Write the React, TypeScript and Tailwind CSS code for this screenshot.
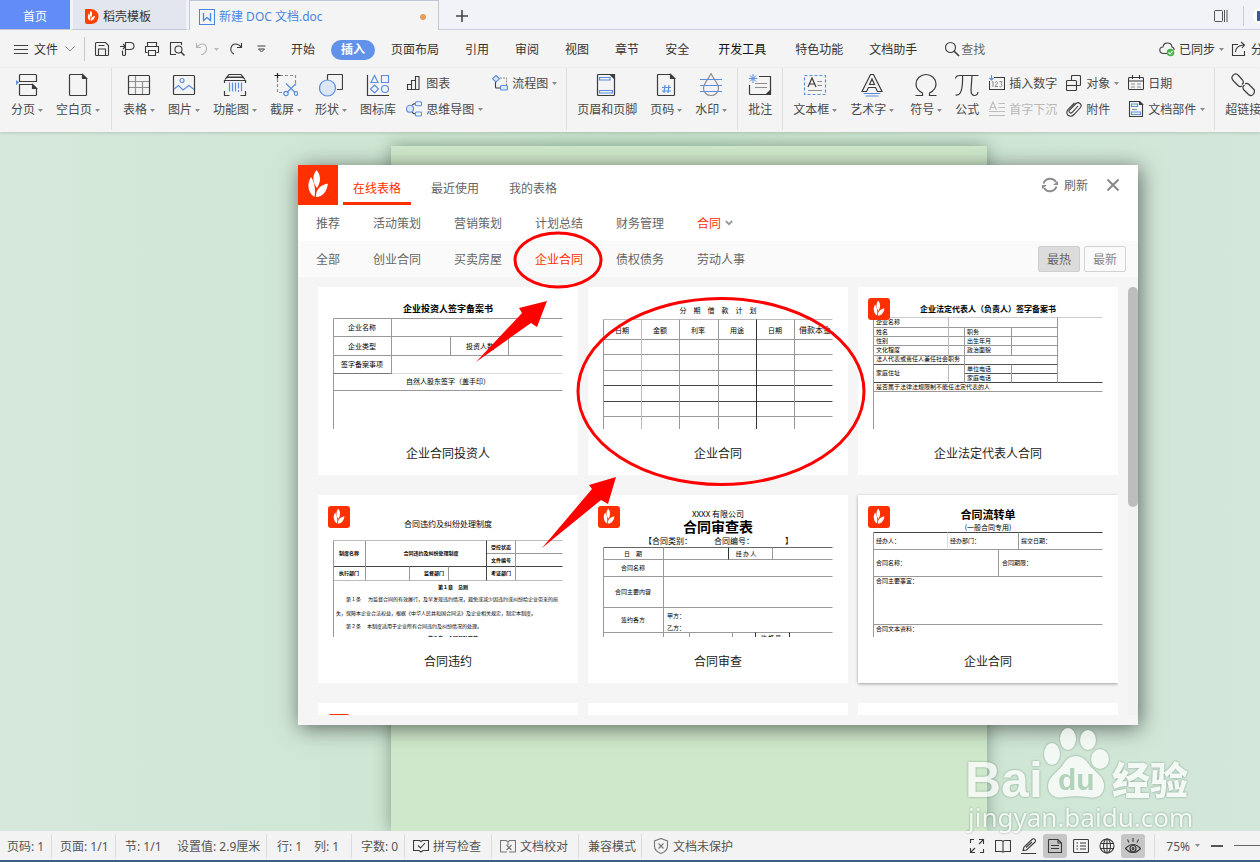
import { JSX, ReactNode } from "react"

type Line = [number, number, number, number, string?]
type Label = [number, number, string, number, ("start" | "middle")?, boolean?]

interface Template {
    name: string;
    badge?: boolean;
    raised?: boolean;
    lines: Line[];
    labels: Label[];
}

interface Tool {
    label: string;
    icon: JSX.Element;
    caret?: boolean;
    disabled?: boolean;
}

const INK = "#3b3b3b"
const BLUE = "#5b8ede"
const GREY = "#8f8f8f"

const Caret = ({ light }: { light?: boolean }) => (
    <svg viewBox="0 0 5 3" className="h-[3px] w-[5px] shrink-0" aria-hidden="true">
        <path d="M0 0h5L2.5 3z" fill={light ? "#bbb" : "#8a8a8a"} />
    </svg>
)

const Big = ({ children }: { children: ReactNode }) => (
    <svg viewBox="0 0 24 24" className="size-6" fill="none" stroke={INK} strokeWidth="1.2" aria-hidden="true">
        {children}
    </svg>
)

const Small = ({ children, stroke = INK }: { children: ReactNode; stroke?: string }) => (
    <svg viewBox="0 0 16 16" className="size-4 shrink-0" fill="none" stroke={stroke} strokeWidth="1.1" aria-hidden="true">
        {children}
    </svg>
)

// label beside an icon, kept optically centred
const Word = ({ children }: { children: ReactNode }) => <span className="pt-[2px]">{children}</span>

const Leaves = () => (
    <>
        <path d="M18.5 5C23 10 23 17 19 23C14 17 14.500 10 18.500 5Z" />
        <path d="M13 12C8.500 19 10 28 16.500 32C17.500 25 17 18 13 12Z" />
        <path d="M30 18.500C22 20 17.500 25 18 32C25 31.500 28.500 27 30 18.500Z" />
    </>
)

const LeafLogo = ({ className }: { className: string }) => (
    <svg viewBox="0 0 40 40" className={className} fill="#fff" aria-hidden="true">
        <Leaves />
    </svg>
)

/* RIBBON DATA */

const pageTools: Tool[] = [
    {
        label: "分页",
        caret: true,
        icon: (
            <Big>
                <path d="M4.500 8.500V2.500q0-1 1-1h15q1 0 1 1v6zM4.500 11.500h13l4 4v6q0 1-1 1h-15q-1 0-1-1z" />
                <path d="M17.500 11.500v4h4z" fill={INK} />
                <path d="M1 7l3 2.500L1 12z" fill={BLUE} stroke="none" />
            </Big>
        ),
    },
    {
        label: "空白页",
        caret: true,
        icon: (
            <Big>
                <path d="M4.500 1.500h12l4 4v16q0 1-1 1h-15q-1 0-1-1v-19q0-1 1-1z" />
                <path d="M16.500 1.500v4h4z" fill={INK} />
            </Big>
        ),
    },
]

const insertTools: Tool[] = [
    {
        label: "表格",
        caret: true,
        icon: (
            <Big>
                <path d="M2 8.500h20M2 14.500h20M8.500 3v18M15.500 9v12" stroke={GREY} />
                <rect x="1.500" y="2.500" width="21" height="19" rx="1" />
            </Big>
        ),
    },
    {
        label: "图片",
        caret: true,
        icon: (
            <Big>
                <rect x="1.500" y="2.500" width="21" height="19" rx="1" />
                <circle cx="10" cy="7.500" r="2" stroke={BLUE} />
                <path d="M2 16l4.500-3.500L11 17l6-4.500 5 4" stroke={BLUE} />
            </Big>
        ),
    },
    {
        label: "功能图",
        caret: true,
        icon: (
            <Big>
                <path d="M6 1.500h12l2 2.500H4zM2 6.500q1-2 3-2h14q2 0 3 2M1.500 10V7.500h21V10M1.500 18v4.500h5M22.500 18v4.500h-5" />
                <path d="M6.500 9.500v9M9.500 9.500v9M12.500 9.500v9M15.500 9.500v6M15.500 17v2M18.500 9.500v9" stroke={BLUE} />
            </Big>
        ),
    },
    {
        label: "截屏",
        caret: true,
        icon: (
            <Big>
                <path d="M6 2.500h15.500v10M3.500 6v13.500H9" stroke={GREY} strokeDasharray="3 2" />
                <path d="M0.500 2.500h6M3.500 0v5.500" stroke="#222" />
                <path d="M12 10.500l9 9M22 10.500l-9 9" stroke={BLUE} />
                <circle cx="12" cy="20.500" r="2.200" stroke={BLUE} />
                <circle cx="22" cy="20.500" r="1.800" stroke={BLUE} />
            </Big>
        ),
    },
    {
        label: "形状",
        caret: true,
        icon: (
            <Big>
                <path d="M8.500 7V2.500q0-1 1-1h13q1 0 1 1v13q0 1-1 1H18" />
                <circle cx="8.500" cy="15" r="8" stroke={BLUE} fill="#dde6f4" />
            </Big>
        ),
    },
    {
        label: "图标库",
        icon: (
            <Big>
                <path d="M1.500 2v20.500H23" />
                <path d="M8.500 2.500l3.500 7H5zM15.500 2.500h7v7h-7zM8.500 12l4 4-4 4-4-4z" stroke={BLUE} />
                <circle cx="19" cy="16" r="3.500" stroke={BLUE} />
            </Big>
        ),
    },
]

const chartTools: Tool[] = [
    {
        label: "图表",
        icon: (
            <Small>
                <path d="M1.500 9.500h4v5h-4zM5.500 5.500h4v9h-4zM9.500 1.500h3.500v13H9.500z" />
            </Small>
        ),
    },
    {
        label: "思维导图",
        caret: true,
        icon: (
            <Small stroke={BLUE}>
                <path d="M6 4.500Q7 2.500 10 2.500M6 11Q7 13 10 13" stroke={INK} />
                <circle cx="4" cy="7.800" r="3.500" fill="#dde6f4" />
                <rect x="9.500" y="0.800" width="6" height="4" rx="1" />
                <rect x="9.500" y="11" width="6" height="4" rx="1" />
            </Small>
        ),
    },
]

const flowTools: Tool[] = [
    {
        label: "流程图",
        caret: true,
        icon: (
            <Small stroke={BLUE}>
                <path d="M3.500 6v6q0 1 1 1H8" stroke={INK} />
                <path d="M8 3h6.500v7" stroke={GREY} strokeDasharray="2 1" />
                <path d="M4 .5L7.500 3.800 4 7 .5 3.800z" fill="#dde6f4" />
                <rect x="8.500" y="10.500" width="7" height="4.500" rx="1" fill="#dde6f4" />
            </Small>
        ),
    },
]

const headerTools: Tool[] = [
    {
        label: "页眉和页脚",
        icon: (
            <Big>
                <path d="M2.500 2.500q0-1 1-1h12l4 4v16q0 1-1 1h-15q-1 0-1-1z" />
                <path d="M15.500 1.500h4v4z" fill={INK} />
                <path d="M4.500 4.500h10.500v2.500H4.500zM4.500 17.500h13v2.500h-13z" stroke={BLUE} />
            </Big>
        ),
    },
    {
        label: "页码",
        caret: true,
        icon: (
            <Big>
                <path d="M4.500 1.500h12l4 4v16q0 1-1 1h-15q-1 0-1-1v-19q0-1 1-1z" />
                <path d="M16.500 1.500v4h4z" fill={INK} />
                <path d="M11 12l-1 8M15 12l-1 8M8 14.500h9M8 18h9" stroke={BLUE} />
            </Big>
        ),
    },
    {
        label: "水印",
        caret: true,
        icon: (
            <Big>
                <path d="M12 .5C9 7 4.500 10 4.500 15.500a7.500 7 0 0015 0C19.500 10 15 7 12 .5z" stroke={GREY} />
                <path d="M1 6.500h22M1 12.500h22M1 18.500h22" stroke={BLUE} />
            </Big>
        ),
    },
]

const noteTools: Tool[] = [
    {
        label: "批注",
        icon: (
            <Big>
                <path d="M11 3.500h11.500v14l-4 4H2.500q-1 0-1-1V12" />
                <path d="M22.500 17.500v4h-4z" fill={INK} />
                <path d="M7 10.500h12M7 14.500h12" stroke={GREY} />
                <path d="M5 1v9M.8 5.500h8.500M2 2.500l6 6M8 2.500l-6 6" stroke={BLUE} strokeWidth="1" />
            </Big>
        ),
    },
]

const textTools: Tool[] = [
    {
        label: "文本框",
        caret: true,
        icon: (
            <Big>
                <rect x="1.500" y="2.500" width="21" height="19" stroke={BLUE} strokeDasharray="3 2" />
                <path d="M5 14l4-9 4 9M6.500 11h5" />
                <path d="M14.500 8.500H19M14.500 12.500H19M5 17.500h14" stroke={GREY} />
            </Big>
        ),
    },
    {
        label: "艺术字",
        caret: true,
        icon: (
            <Big>
                <path d="M2 18.500L10.500 1.500h3L22 18.500h-4.500l-2-4h-7l-2 4zM9.500 11.500L12 6l2.500 5.500z" />
                <path d="M3.500 20.500h17M5.500 23h13" stroke={BLUE} />
            </Big>
        ),
    },
]

const symbolTools: Tool[] = [
    {
        label: "符号",
        caret: true,
        icon: (
            <Big>
                <path d="M1.500 22.500h7v-2.500C4.500 18 2 15 2 11a10 9.500 0 0120 0c0 4-2.500 7-6.500 9v2.500h7" />
            </Big>
        ),
    },
    {
        label: "公式",
        icon: (
            <Big>
                <path d="M.5 5.500Q1 2.500 4.500 2.500h19M7.500 2.500Q8 14 5.500 19.500 4 22.500.5 22M17 2.500L16 17q0 5.500 3.500 5.500Q22.500 22.500 23 19" />
            </Big>
        ),
    },
]

const numberTools: Tool[] = [
    {
        label: "插入数字",
        icon: (
            <Small>
                <path d="M5 2.500h10.500v12H.5V6" />
                <path d="M2.500 0v5M.5 3l2 2 2-2" stroke={BLUE} />
                <path d="M3 7l1-.5V12M6 7.500q2-2 2.500 0 0 1.500-2.500 4h3M10.500 6.500H13L12 9q2 1 .5 2.500-1 .8-2 0" stroke={GREY} strokeWidth="1" />
            </Small>
        ),
    },
    {
        label: "首字下沉",
        disabled: true,
        icon: (
            <Small stroke="#bdbdbd">
                <path d="M.5 9L4 1l3.500 8M2 6.500h4M9.500 2.500H16M9.500 6.500H16M0 10.500h16M0 14.500h16" />
            </Small>
        ),
    },
]

const objectTools: Tool[] = [
    {
        label: "对象",
        caret: true,
        icon: (
            <Small>
                <path d="M5.500 5V1.500q0-1 1-1h7q1 0 1 1v8q0 1-1 1H11" />
                <rect x="0.500" y="5.500" width="10" height="10" rx="1" />
                <path d="M.5 10.500h10" />
            </Small>
        ),
    },
    {
        label: "附件",
        icon: (
            <Small>
                <path d="M12 5l-6 6.500q-1.500 1.200-2.500 0t0-2.500L10 2.500q2-1.800 4 0t.500 4L8 13.500q-3 3-6 .8-2.500-3 .2-6L8.500 2" />
            </Small>
        ),
    },
]

const partTools: Tool[] = [
    {
        label: "日期",
        icon: (
            <Small>
                <rect x="0.500" y="2.500" width="15" height="12" rx="1" />
                <path d="M.5 6h15M4.500 0v4M11.500 0v4" />
                <path d="M3 9h4M9 9h4M3 12h4M9 12h4" stroke={GREY} />
            </Small>
        ),
    },
    {
        label: "文档部件",
        caret: true,
        icon: (
            <Small>
                <path d="M1.500.5h10l3 3v12h-13z" />
                <path d="M11.500.5v3h3z" fill={INK} />
                <path d="M3.500 3h6v2.500h-6zM3.500 11h9v2.500h-9z" stroke={BLUE} />
                <path d="M4 8.500h5" stroke={GREY} />
            </Small>
        ),
    },
]

const linkTools: Tool[] = [
    {
        label: "超链接",
        icon: (
            <Big>
                <path d="M11 11.500q2.500-2 .5-4.500L7.500 2.500Q4.500-.5 2 2.300T2.500 8l4.500 4.500q2 1.800 4 .500M13.500 12q-3 2-.5 5l4.500 4.500q3 2.500 5-.5t0-5L18 11.500q-2-1.800-4-.5" />
            </Big>
        ),
    },
]

/* TEMPLATE THUMBNAILS */

const templates: Template[] = [
    {
        name: "企业合同投资人",
        lines: [
            [15, 31, 244, 31], [15, 49, 244, 49], [15, 68, 244, 68], [15, 86, 74, 86, "#777"], [74, 86, 244, 86, "#ddd"],
            [15, 103, 244, 103], [15, 31, 15, 142], [73, 31, 73, 86], [132, 49, 132, 68], [190, 49, 190, 68],
        ],
        labels: [
            [130, 22, "企业投资人签字备案书", 9, "middle", true],
            [44, 40, "企业名称", 7, "middle"],
            [44, 59, "企业类型", 7, "middle"],
            [44, 77, "签字备案事项", 7, "middle"],
            [162, 59, "投资人数", 7, "middle"],
            [130, 94, "自然人股东签字（盖手印）", 7, "middle"],
        ],
    },
    {
        name: "企业合同",
        lines: [
            [15, 32, 244, 32, "#bbb"], [15, 52, 244, 52], [15, 67, 244, 67], [15, 83, 244, 83], [15, 98, 244, 98, "#444"],
            [15, 114, 244, 114, "#444"], [15, 129, 244, 129], [15, 32, 15, 142], [53, 32, 53, 142, "#bbb"], [91, 32, 91, 142],
            [130, 32, 130, 142], [168, 32, 168, 142, "#333"], [206, 32, 206, 142],
        ],
        labels: [
            [130, 23, "分　期　借　款　计　划", 7, "middle"],
            [34, 43, "日期", 7, "middle"],
            [72, 43, "金额", 7, "middle"],
            [110, 43, "利率", 7, "middle"],
            [149, 43, "用途", 7, "middle"],
            [187, 43, "日期", 7, "middle"],
            [211, 43, "借款本金", 8],
        ],
    },
    {
        name: "企业法定代表人合同",
        badge: true,
        lines: [
            [15, 30, 244, 30, "#ccc"], [15, 40, 199, 40], [15, 49, 199, 49], [15, 58, 199, 58], [15, 68, 199, 68],
            [15, 77, 199, 77, "#555"], [106, 86, 199, 86, "#555"], [15, 95, 244, 95, "#444"], [15, 104, 244, 104],
            [15, 30, 15, 142], [90, 30, 90, 68, "#bbb"], [90, 77, 90, 95, "#bbb"], [106, 40, 106, 95], [153, 40, 153, 68],
            [153, 77, 153, 95], [199, 30, 199, 95],
        ],
        labels: [
            [130, 22, "企业法定代表人（负责人）签字备案书", 8, "middle", true],
            [18, 35, "企业名称", 6],
            [18, 45, "姓名", 6],
            [18, 54, "性别", 6],
            [18, 63, "文化程度", 6],
            [18, 72, "法人代表或责任人兼任社会职务", 6],
            [18, 86, "家庭住址", 6],
            [18, 100, "是否属于法律法规限制不能任法定代表的人", 6],
            [109, 45, "职务", 6],
            [109, 54, "出生年月", 6],
            [109, 63, "政治面貌", 6],
            [109, 82, "单位电话", 6],
            [109, 91, "家庭电话", 6],
        ],
    },
    {
        name: "合同违约",
        badge: true,
        lines: [
            [15, 45, 244, 45, "#bbb"], [168, 58, 244, 58], [15, 71, 244, 71, "#444"], [15, 85, 244, 85, "#bbb"],
            [15, 45, 15, 142], [47, 45, 47, 85], [91, 71, 91, 85], [130, 71, 130, 85], [168, 45, 168, 85, "#444"], [197, 45, 197, 85],
        ],
        labels: [
            [130, 29, "合同违约及纠纷处理制度", 8, "middle"],
            [31, 58, "制度名称", 5, "middle", true],
            [113, 58, "合同违约及纠纷处理制度", 5, "middle", true],
            [183, 52, "受控状态", 5, "middle", true],
            [183, 65, "文件编号", 5, "middle", true],
            [31, 78, "执行部门", 5, "middle", true],
            [116, 78, "监督部门", 5, "middle", true],
            [183, 78, "考证部门", 5, "middle", true],
            [135, 92, "第１章　总则", 5, "middle", true],
            [28, 104, "第１条", 5],
            [50, 104, "为监督合同的有效履行，及早发现违约情况，避免或减少因违约或纠纷给企业带来的损", 5],
            [18, 118, "失，保障本企业合法权益，根据《中华人民共和国合同法》及企业相关规定，制定本制度。", 5],
            [28, 131, "第２条", 5],
            [49, 131, "本制度适用于企业所有合同违约及纠纷情况的处理。", 5],
            [135, 143, "第２章　合同风险防范", 5, "middle", true],
        ],
    },
    {
        name: "合同审查",
        badge: true,
        lines: [
            [15, 52, 244, 52, "#666"], [15, 64, 244, 64], [15, 81, 244, 81], [15, 112, 244, 112], [15, 137, 244, 137],
            [15, 52, 15, 142], [75, 52, 75, 142], [140, 52, 140, 64, "#333"], [184, 52, 184, 64], [101, 137, 101, 142],
            [144, 137, 144, 142], [167, 137, 167, 142, "#333"], [201, 137, 201, 142, "#333"],
        ],
        labels: [
            [130, 19, "XXXX 有限公司", 8, "middle"],
            [130, 32, "合同审查表", 14, "middle", true],
            [56, 46, "【合同类别：", 8],
            [126, 46, "合同编号：", 8],
            [197, 46, "】", 8],
            [45, 59, "日　期", 6, "middle"],
            [158, 59, "经 办 人", 6, "middle"],
            [45, 73, "合同名称", 6, "middle"],
            [45, 97, "合同主要内容", 6, "middle"],
            [45, 125, "签约各方", 6, "middle"],
            [79, 121, "甲方：", 6],
            [79, 133, "乙方：", 6],
            [183, 143, "监 督 员", 6, "middle"],
        ],
    },
    {
        name: "企业合同",
        badge: true,
        raised: true,
        lines: [
            [15, 37, 244, 37, "#444"], [15, 54, 244, 54], [15, 81, 244, 81], [15, 129, 244, 129],
            [15, 37, 15, 142], [89, 37, 89, 54, "#ddd"], [160, 37, 160, 54], [140, 54, 140, 81],
        ],
        labels: [
            [130, 20, "合同流转单", 11, "middle", true],
            [130, 32, "(一般合同专用)", 7, "middle"],
            [18, 46, "经办人：", 6],
            [92, 46, "经办部门：", 6],
            [163, 46, "提交日期：", 6],
            [18, 68, "合同名称：", 6],
            [144, 68, "合同期限：", 6],
            [18, 86, "合同主要事宜：", 6],
            [18, 134, "合同文本资料：", 6],
        ],
    },
    { name: "合同协议", badge: true, lines: [], labels: [] },
    { name: "合同范本", lines: [], labels: [] },
    { name: "合同登记", lines: [], labels: [] },
]

const menuTabs = [
    { label: "页面布局", space: "px-[13px]" },
    { label: "引用", space: "px-[13px]" },
    { label: "审阅", space: "px-[13px]" },
    { label: "视图", space: "px-[13px]" },
    { label: "章节", space: "px-[13px]" },
    { label: "安全", space: "px-[13px]" },
    { label: "开发工具", space: "px-4 text-[#111]" },
    { label: "特色功能", space: "px-[13px]" },
    { label: "文档助手", space: "px-[13px]" },
]

function BigTool({ label, icon, caret }: Tool) {
    return (
        <button type="button" className="flex shrink-0 flex-col items-center gap-[5px]">
            {icon}
            <span className="flex items-center gap-[3px] whitespace-nowrap leading-4">
                {label}
                {caret && <Caret />}
            </span>
        </button>
    )
}

function Group({ tools }: { tools: Tool[] }) {
    return (
        <div className="flex items-start gap-[13px]">
            {tools.map((t) => (
                <BigTool key={t.label} {...t} />
            ))}
        </div>
    )
}

function Stack({ tools }: { tools: Tool[] }) {
    return (
        <div className="flex shrink-0 flex-col items-start gap-2 pt-[1px]">
            {tools.map((t) => (
                <button
                    key={t.label}
                    type="button"
                    disabled={t.disabled}
                    className="flex items-center gap-1 whitespace-nowrap leading-4 disabled:text-[#b8b8b8]"
                >
                    {t.icon}
                    <Word>{t.label}</Word>
                    {t.caret && <Caret />}
                </button>
            ))}
        </div>
    )
}

const Divider = ({ space = "mx-[10px]" }: { space?: string }) => (
    <div className={"-mt-[5px] h-[62px] w-px shrink-0 bg-[#dfdfdf] " + space} />
)

function TitleTabs() {
    return (
        <header className="flex h-[30px] shrink-0 items-stretch bg-[#f2f3f8] text-[12px]">
            <button type="button" className="w-[70px] border-b border-[#c3c8d6] bg-[#628df9] pt-1 text-white">
                首页
            </button>
            <button
                type="button"
                className="flex w-[119px] items-center gap-1 border-x-3 border-b border-x-[#f2f3f8] border-b-[#c3c8d6] bg-[#e3e6ef] pl-3 pt-1 text-[#333]"
            >
                <svg viewBox="0 0 14 15" className="h-[15px] w-[14px]" aria-hidden="true">
                    <path d="M0 0h6q7.500 1 7.500 7.500T6.500 15H2q-2 0-2-2z" fill="#ff4000" />
                    <g fill="#fff" transform="translate(-1 0) scale(.37)">
                        <Leaves />
                    </g>
                </svg>
                稻壳模板
            </button>
            <button
                type="button"
                className="flex w-[250px] items-center gap-1 border-x border-t border-[#c3c8d6] bg-[#f4f4f4] pl-[9px] pr-3 pt-[2px] text-[#4a86e0]"
            >
                <svg viewBox="0 0 16 16" className="size-4" fill="none" stroke="#4a86e0" aria-hidden="true">
                    <rect x="0.500" y="0.500" width="15" height="15" />
                    <path d="M4.500 4v7.500l3.500-3 3.500 3V4" strokeWidth="1.300" />
                </svg>
                新建 DOC 文档.doc
                <span className="ml-auto size-[6px] rounded-full bg-[#e69f5b]" />
            </button>
            <div className="flex flex-1 items-center overflow-hidden border-b border-[#c9cede] pt-[2px]">
                <button type="button" aria-label="新建标签" className="ml-[17px]">
                    <svg viewBox="0 0 12 12" className="size-3" stroke="#444" strokeWidth="1.600" aria-hidden="true">
                        <path d="M6 0v12M0 6h12" />
                    </svg>
                </button>
                <svg viewBox="0 0 14 12" className="ml-auto h-3 w-[14px]" fill="none" stroke="#555" aria-hidden="true">
                    <rect x="0.500" y="0.500" width="8" height="11" rx="1" />
                    <path d="M10.500 0v12M13 0v12" />
                </svg>
                <div className="ml-[15px] h-5 w-px bg-[#c9cbd2]" />
                <div className="ml-[9px] -mr-[9px] flex size-4 items-center rounded-full bg-white">
                    <span className="ml-1 h-[10px] w-2 bg-[#3c5b92]" />
                </div>
            </div>
        </header>
    )
}

function MenuBar() {
    return (
        <nav className="flex h-[38px] shrink-0 items-center overflow-hidden whitespace-nowrap bg-[#f4f4f4] pl-[14px] text-[12px] text-[#333]">
            <button type="button" className="flex items-center gap-[6px]">
                <svg viewBox="0 0 14 9" className="h-[9px] w-[14px]" stroke="#444" aria-hidden="true">
                    <path d="M0 .5h14M0 4.500h14M0 8.500h14" />
                </svg>
                <Word>文件</Word>
                <svg viewBox="0 0 10 6" className="ml-[1px] h-[6px] w-[10px]" fill="none" stroke="#888" aria-hidden="true">
                    <path d="M.5.5L5 5 9.500.5" />
                </svg>
            </button>
            <div className="ml-[9px] h-6 w-px bg-[#c9c9c9]" />
            <div className="ml-[9px] flex items-center gap-[9px]">
                <button type="button" aria-label="保存">
                    <Small>
                        <path d="M1.500 2.500q0-1 1-1h9l3 3v9q0 1-1 1h-11q-1 0-1-1zM4.500 14V8h7v6M4.500 4.500h6" />
                    </Small>
                </button>
                <button type="button" aria-label="输出为PDF">
                    <Small>
                        <path d="M3.500 9.500v4q0 1 1.500 1t1.500-1V1.500H11q4 0 4 3.500t-4 3.500H6.500M1 5.500h5M4 3l2.500 2.500L4 8" />
                    </Small>
                </button>
                <button type="button" aria-label="打印">
                    <Small>
                        <path d="M3.500 5V1.500h9V5M3.500 11.500h-2v-6h13v6h-2M4.500 9.500h7v5h-7z" />
                    </Small>
                </button>
                <button type="button" aria-label="打印预览">
                    <Small>
                        <path d="M7 13.500H1.500v-12h11V4" />
                        <circle cx="9.500" cy="8.500" r="3.500" />
                        <path d="M12 11l3.500 3.500" strokeWidth="1.500" />
                    </Small>
                </button>
                <button type="button" aria-label="撤销" disabled className="flex items-center gap-1">
                    <Small stroke="#b5b5b5">
                        <path d="M2.500 2v4.500H7M2.500 6.500Q5 3 8.500 3t4 4-4 6.500H7" />
                    </Small>
                    <Caret light />
                </button>
                <button type="button" aria-label="恢复">
                    <Small>
                        <path d="M13.500 2v4.500H9M13.500 6.500Q11 3 7.500 3T3 7t3 6" />
                    </Small>
                </button>
                <button type="button" aria-label="更多" className="pl-1">
                    <svg viewBox="0 0 9 8" className="h-2 w-[9px]" fill="none" stroke={INK} aria-hidden="true">
                        <path d="M.5 1h8M1.500 4h6L4.500 7z" />
                    </svg>
                </button>
            </div>
            <div className="ml-3 flex items-center">
                <button type="button" className="px-[13px] pt-[2px]">开始</button>
                <button type="button" className="mx-[3px] mt-[1px] h-5 rounded-full bg-[#5f92e8] px-[10px] font-bold text-white">
                    插入
                </button>
                {menuTabs.map((t) => (
                    <button key={t.label} type="button" className={"pt-[2px] " + t.space}>
                        {t.label}
                    </button>
                ))}
            </div>
            <button type="button" className="ml-[14px] flex items-center gap-[1px] text-[#666]">
                <Small>
                    <circle cx="6.500" cy="6.500" r="5" />
                    <path d="M10 10l5 5" strokeWidth="1.600" />
                </Small>
                <Word>查找</Word>
            </button>
            <div className="-mr-[15px] ml-auto flex items-center">
                <button type="button" className="flex items-center gap-1">
                    <Small>
                        <path d="M8 12.500H4Q.8 12 .8 9T4 6q.5-4 4.500-4T13 6q2.200.5 2.200 3" />
                        <circle cx="11.500" cy="11.500" r="3.800" fill="#4db24a" stroke="none" />
                        <path d="M9.500 11.500l1.500 1.500 2.500-2.800" stroke="#fff" />
                    </Small>
                    <Word>已同步</Word>
                    <Caret />
                </button>
                <button type="button" className="ml-[7px] flex items-center gap-1">
                    <Small>
                        <path d="M7 3.500H1.500v11h12V10M4.500 11q0-6 8-7M10 1l3.500 3L11 7" />
                    </Small>
                    <Word>分享</Word>
                </button>
            </div>
        </nav>
    )
}

function Ribbon() {
    return (
        <div className="z-10 flex h-16 shrink-0 items-start overflow-hidden bg-[#f4f4f4] pl-[11px] pt-[5px] text-[12px] text-[#4a4a4a] shadow-[0_1px_3px_rgba(0,0,0,0.15)]">
            <Group tools={pageTools} />
            <Divider space="mx-[11px]" />
            <Group tools={insertTools} />
            <div className="ml-[10px] flex gap-[9px]">
                <Stack tools={chartTools} />
                <Stack tools={flowTools} />
            </div>
            <Divider space="ml-[9px] mr-[10px]" />
            <Group tools={headerTools} />
            <Divider />
            <Group tools={noteTools} />
            <Divider />
            <div className="flex gap-4">
                <Group tools={textTools} />
                <Group tools={symbolTools} />
            </div>
            <div className="ml-[10px] flex gap-[9px]">
                <Stack tools={numberTools} />
                <Stack tools={objectTools} />
                <Stack tools={partTools} />
            </div>
            <Divider space="ml-[9px] mr-[10px]" />
            <Group tools={linkTools} />
        </div>
    )
}

function Card({ name, badge, raised, lines, labels }: Template) {
    return (
        <article
            className={
                "relative flex h-[188px] flex-col items-center bg-white " +
                (raised ? "shadow-[0_1px_3px_rgba(0,0,0,0.35)]" : "")
            }
        >
            <svg viewBox="0 0 260 142" className="h-[142px] w-full" fontFamily='"Noto Sans CJK SC", sans-serif' role="img" aria-label={name}>
                {lines.map(([x1, y1, x2, y2, color], i) => (
                    <path key={i} d={`M${x1 + 0.5} ${y1 + 0.5}L${x2 + 0.5} ${y2 + 0.5}`} stroke={color ?? "#999"} />
                ))}
                {labels.map(([x, y, text, size, anchor, bold], i) => (
                    <text
                        key={i}
                        x={x}
                        y={y + Math.round(size * 0.38)}
                        fontSize={size}
                        fontWeight={bold ? 700 : 400}
                        textAnchor={anchor ?? "start"}
                        fill="#000"
                    >
                        {text}
                    </text>
                ))}
            </svg>
            {badge && <LeafLogo className="absolute left-[10px] top-[11px] size-[22px] rounded-[3px] bg-[#ff3000]" />}
            <h3 className="mt-[15px] text-[12px] leading-5 text-[#222]">{name}</h3>
        </article>
    )
}

const rowItem = "whitespace-nowrap pt-[2px]"

function TemplateDialog() {
    return (
        <section
            role="dialog"
            aria-label="在线表格"
            className="absolute left-[298px] top-[33px] flex h-[560px] w-[840px] flex-col bg-[#f5f5f5] text-[12px] text-[#666] shadow-[2px_3px_20px_rgba(0,0,0,0.55)]"
        >
            {/* tabs */}
            <div className="flex h-10 shrink-0 items-stretch bg-white">
                <LeafLogo className="size-10 bg-[#ff3000]" />
                <div className="ml-[5px] flex gap-[10px]">
                    <button type="button" className="border-b-3 border-[#ff3000] px-[10px] pt-[10px] text-[#ff3000]">在线表格</button>
                    <button type="button" className="border-b-3 border-transparent px-[10px] pt-[10px]">最近使用</button>
                    <button type="button" className="border-b-3 border-transparent px-[10px] pt-[10px]">我的表格</button>
                </div>
                <button type="button" className="ml-auto flex items-center gap-[6px]">
                    <svg viewBox="0 0 16 16" className="size-4" fill="none" stroke="#8c8c8c" strokeWidth="2" aria-hidden="true">
                        <path d="M1.500 6.500a7 7 0 0112.500-1.500M14.500 9.500A7 7 0 012 11" />
                        <path d="M16 4v4h-5zM0 12V8h5z" fill="#8c8c8c" stroke="none" />
                    </svg>
                    <Word>刷新</Word>
                </button>
                <button type="button" aria-label="关闭" className="ml-[19px] mr-[19px]">
                    <svg viewBox="0 0 12 12" className="size-3" stroke="#888" strokeWidth="2" aria-hidden="true">
                        <path d="M.5.500l11 11M11.500.500l-11 11" />
                    </svg>
                </button>
            </div>

            {/* categories */}
            <div className="flex h-9 shrink-0 items-center gap-[33px] bg-white pl-[18px]">
                {["推荐", "活动策划", "营销策划", "计划总结", "财务管理"].map((c) => (
                    <button key={c} type="button" className={rowItem}>{c}</button>
                ))}
                <button type="button" className="flex items-center gap-1 text-[#ff3000]">
                    <Word>合同</Word>
                    <svg viewBox="0 0 8 6" className="h-[6px] w-2" fill="none" stroke="#999" strokeWidth="1.800" aria-hidden="true">
                        <path d="M.8 1L4 4.200 7.200 1" />
                    </svg>
                </button>
            </div>

            {/* filters */}
            <div className="flex h-9 shrink-0 items-center bg-[#fafafa] pl-[18px] pr-3">
                <div className="flex gap-[33px]">
                    <button type="button" className={rowItem}>全部</button>
                    <button type="button" className={rowItem}>创业合同</button>
                    <button type="button" className={rowItem}>买卖房屋</button>
                    <button type="button" className="whitespace-nowrap pt-[2px] text-[#ff3000]">企业合同</button>
                    <button type="button" className={rowItem}>债权债务</button>
                    <button type="button" className={rowItem}>劳动人事</button>
                </div>
                <div className="ml-auto flex gap-1">
                    <button type="button" className="h-[26px] w-[42px] rounded-[2px] border border-[#cfcfcf] bg-[#dcdcdc] pt-[2px]">最热</button>
                    <button type="button" className="h-[26px] w-[42px] rounded-[2px] border border-[#d2d2d2] bg-[#fafafa] pt-[2px] text-[#888]">最新</button>
                </div>
            </div>

            {/* templates */}
            <div className="flex min-h-0 flex-1 gap-[10px] py-[10px] pl-5">
                <div className="grid min-h-0 flex-1 auto-rows-max grid-cols-3 gap-x-[10px] gap-y-5 overflow-hidden">
                    {templates.map((t, i) => (
                        <Card key={i} {...t} />
                    ))}
                </div>
                <div className="w-[10px] bg-[#f2f2f2]">
                    <div className="h-[220px] rounded-full bg-[#bdbdbd]" />
                </div>
            </div>

            {/* hand-drawn marks */}
            <svg viewBox="0 0 840 560" className="pointer-events-none absolute inset-0 size-full" fill="none" stroke="#f00" strokeWidth="3" aria-hidden="true">
                <ellipse cx="260" cy="95" rx="43" ry="27" />
                <ellipse cx="423" cy="226.500" rx="143" ry="93" />
                <path d="M249 136L221 143L224 148L178 197L233 158L239 162Z" fill="#f00" stroke="none" />
                <path d="M318 312L291 320L294 324L244 383L303 335L310 339Z" fill="#f00" stroke="none" />
            </svg>
        </section>
    )
}

const Cell = ({ width, icon, children }: { width: string; icon?: ReactNode; children: ReactNode }) => (
    <div className={"flex shrink-0 items-center gap-1 whitespace-nowrap " + width}>
        {icon}
        <Word>{children}</Word>
    </div>
)

const Bar = () => <div className="h-6 w-px shrink-0 bg-[#dcdcdc]" />

const viewButton = "flex h-6 w-6 items-center justify-center rounded-[3px]"

function StatusBar() {
    return (
        <footer className="flex h-[31px] shrink-0 items-center overflow-hidden border-b-2 border-[#3d5f85] bg-[#f3f3f3] text-[12px] text-[#555]">
            <Cell width="w-[51px] pl-[7px]">页码: 1</Cell>
            <Bar />
            <Cell width="w-[63px] pl-2">页面: 1/1</Cell>
            <Bar />
            <Cell width="w-[61px] pl-[9px]">节: 1/1</Cell>
            <Cell width="w-[89px]">设置值: 2.9厘米</Cell>
            <Bar />
            <Cell width="w-[47px] pl-[10px]">行: 1</Cell>
            <Cell width="w-[37px]">列: 1</Cell>
            <Bar />
            <Cell width="w-[52px] pl-[9px]">字数: 0</Cell>
            <Bar />
            <Cell
                width="w-[86px] pl-2"
                icon={
                    <Small>
                        <path d="M.5 2.500h6l1.500 1 1.500-1h6v10H10l-2 1.500-2-1.500H.5zM5 7.500l2.500 2.500L12 5" />
                    </Small>
                }
            >
                拼写检查
            </Cell>
            <Bar />
            <Cell
                width="w-[86px] pl-2"
                icon={
                    <Small stroke="#777">
                        <path d="M7 14H.5V2.500h5.500l2 1.500 1.500-1.500H15.500V14H9M8 4v3M6.500 7l5 5M11.500 7l-5 5" />
                    </Small>
                }
            >
                文档校对
            </Cell>
            <Bar />
            <Cell width="w-[62px] pl-[9px]">兼容模式</Cell>
            <Bar />
            <Cell
                width="w-[100px] pl-[11px]"
                icon={
                    <Small stroke="#777">
                        <path d="M8 .5l6.500 2.500v5q0 5-6.500 7.500Q1.500 13 1.500 8V3zM5.500 5.500l5 5M10.500 5.500l-5 5" />
                    </Small>
                }
            >
                文档未保护
            </Cell>

            <div className="ml-auto flex shrink-0 items-center gap-[2px]">
                <button type="button" aria-label="全屏显示" className={viewButton}>
                    <Small>
                        <path d="M10 1.500h4.500V6M14.500 1.500L10 6M6 14.500H1.500V10M1.500 14.500L6 10M1.500 5V1.500H5M14.500 11v3.500H11" />
                    </Small>
                </button>
                <button type="button" aria-label="阅读版式" className={viewButton}>
                    <Small>
                        <path d="M.5 2.500H6q2 0 2 1.500 0-1.500 2-1.500h5.500v11H10q-2 0-2 1 0-1-2-1H.5zM8 4v10" />
                    </Small>
                </button>
                <button type="button" aria-label="写作模式" className={viewButton}>
                    <Small>
                        <path d="M0 15.500h15M2 12.500l1-3.500L11.500 1q1.500-.8 2.500.5t0 2.500L5.500 12zM5 9.500L11 4" />
                    </Small>
                </button>
                <button type="button" aria-label="页面视图" aria-pressed="true" className={viewButton + " bg-[#c6c6c6]"}>
                    <Small>
                        <path d="M2 1.500h9l3.500 3.500v9.500H1.500V2zM11 1.500V5h3.500M4 7.500h8M4 10.500h8" />
                    </Small>
                </button>
                <button type="button" aria-label="大纲" className={viewButton}>
                    <Small>
                        <rect x="0.500" y="1.500" width="15" height="13" rx="1" />
                        <path d="M3.500 5h1.500M3.500 8h1.500M3.500 11h1.500M7 5h6M7 8h6M7 11h6" />
                    </Small>
                </button>
                <button type="button" aria-label="Web版式" className={viewButton}>
                    <Small>
                        <circle cx="8" cy="8" r="7" />
                        <ellipse cx="8" cy="8" rx="3.500" ry="7" />
                        <path d="M8 1v14M1.500 5.500h13M1.500 10.500h13" />
                    </Small>
                </button>
                <button type="button" aria-label="护眼模式" aria-pressed="true" className={viewButton + " bg-[#c6c6c6]"}>
                    <Small>
                        <path d="M.5 10.500q7.500-8 15 0-7.500 8-15 0zM8 0v4M2.500 1.500L4 4.500M13.500 1.500L12 4.500" />
                        <circle cx="8" cy="10.500" r="3" />
                        <circle cx="8" cy="10.500" r="1" />
                    </Small>
                </button>
            </div>
            <div className="ml-[9px] h-6 w-px shrink-0 bg-[#dcdcdc]" />
            <button type="button" className="ml-[11px] flex shrink-0 items-center gap-[5px]">
                <Word>75%</Word>
                <Caret />
            </button>
            <button type="button" aria-label="缩小" className="ml-[11px] h-[2px] w-3 shrink-0 bg-[#555]" />
            <input
                type="range"
                aria-label="显示比例"
                defaultValue={50}
                className="-mr-[74px] ml-[11px] h-px w-[100px] shrink-0 appearance-none bg-[#666]"
            />
        </footer>
    )
}

function Watermark() {
    return (
        <svg
            viewBox="0 0 230 112"
            className="pointer-events-none absolute bottom-[25px] right-[65px] z-20 h-[112px] w-[230px] opacity-75 drop-shadow-[0_0_1px_rgba(60,100,70,0.7)]"
            fill="#fff"
            fontFamily='"Noto Sans", "Noto Sans CJK SC", sans-serif'
        >
            <text x="0" y="72" fontSize="50" fontWeight="700" fontFamily='"Liberation Sans", sans-serif'>Bai</text>
            <ellipse cx="87" cy="29" rx="8" ry="11" />
            <ellipse cx="103" cy="14" rx="8" ry="11" />
            <ellipse cx="123" cy="15" rx="8" ry="10" />
            <ellipse cx="135" cy="34" rx="9" ry="10" />
            <path d="M111 31C119 31 122 37 126 42C132 48 140 53 139 62C138 72 130 74 122 72C115 71 107 71 100 72C92 74 83 71 83 61C83 52 92 48 97 41C101 35 104 31 111 31Z" />
            <text x="93" y="65" fontSize="30" fontWeight="700" fill="#a9cdb0" fontFamily='"Liberation Sans", sans-serif'>du</text>
            <text x="147" y="69" fontSize="38" fontWeight="900">经验</text>
            <text x="3" y="102" fontSize="26">jingyan.baidu.com</text>
        </svg>
    )
}

export default function App() {
    return (
        <div className="relative flex h-screen flex-col overflow-hidden bg-[#f4f4f4] font-['Noto_Sans','Noto_Sans_CJK_SC',sans-serif]">
            <TitleTabs />
            <MenuBar />
            <Ribbon />
            <main className="relative min-h-0 flex-1 overflow-hidden bg-linear-to-r from-[#d6e8dc] via-[#c9e5cd] to-[#d3e7da] pt-[14px]">
                <div className="ml-[391px] h-full w-[596px] bg-[#cfe8cb] shadow-[0_0_16px_rgba(20,50,30,0.4)]" />
                <TemplateDialog />
            </main>
            <StatusBar />
            <Watermark />
        </div>
    )
}
